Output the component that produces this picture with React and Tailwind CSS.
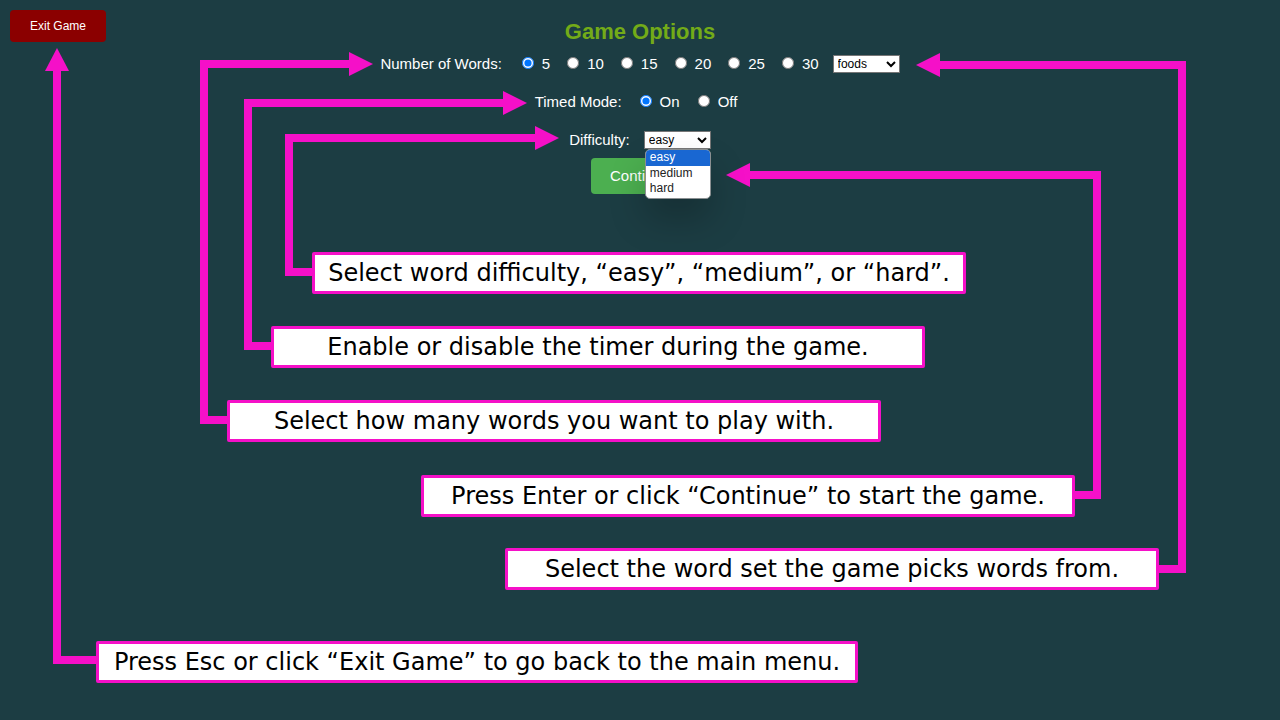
import { useState } from "react";

const wordCounts = [5, 10, 15, 20, 25, 30];
const difficulties = ["easy", "medium", "hard"];

const callouts = [
  { place: "left-[312px] top-[252px] w-[654px]", text: "Select word difficulty, “easy”, “medium”, or “hard”." },
  { place: "left-[271px] top-[326px] w-[654px]", text: "Enable or disable the timer during the game." },
  { place: "left-[227px] top-[400px] w-[654px]", text: "Select how many words you want to play with." },
  { place: "left-[421px] top-[475px] w-[654px]", text: "Press Enter or click “Continue” to start the game." },
  { place: "left-[505px] top-[548px] w-[654px]", text: "Select the word set the game picks words from." },
  { place: "left-[96px] top-[641px] w-[762px]", text: "Press Esc or click “Exit Game” to go back to the main menu." },
];

const arrows = [
  { line: "M98 660H57V70", head: "57,48 45,71 69,71" },
  { line: "M229 420H204V64H350", head: "373,64 349,52 349,76" },
  { line: "M273 346H248V103H504", head: "527,103 503,91 503,115" },
  { line: "M314 272H289V138H536", head: "559,138 535,126 535,150" },
  { line: "M1157 569H1182V65H939", head: "916,65 940,53 940,77" },
  { line: "M1073 495H1097V175H749", head: "726,175 750,163 750,187" },
];

const selectClass =
  "h-[18px] w-[67px] rounded-none border border-[#767676] bg-white text-xs text-black";

function Radio({ name, label, checked, onChange }) {
  return (
    <label className="flex items-center gap-2">
      <input type="radio" name={name} checked={checked} onChange={onChange} className="m-0 mb-0.5 size-3" />
      {label}
    </label>
  );
}

function Annotations() {
  return (
    <div className="pointer-events-none absolute left-1/2 top-0 h-[720px] w-[1280px] -translate-x-1/2">
      <svg viewBox="0 0 1280 720" className="size-full" aria-hidden="true">
        {arrows.map((a) => (
          <g key={a.line}>
            <path d={a.line} fill="none" stroke="#f510c8" strokeWidth="8" />
            <polygon points={a.head} fill="#f510c8" />
          </g>
        ))}
      </svg>
      {callouts.map((c) => (
        <p
          key={c.text}
          className={`absolute rounded-xs border-3 border-[#f510c8] bg-white text-center font-['DejaVu_Sans',sans-serif] text-2xl leading-9 whitespace-nowrap text-black ${c.place}`}
        >
          {c.text}
        </p>
      ))}
    </div>
  );
}

export default function App() {
  const [count, setCount] = useState(5);
  const [timed, setTimed] = useState(true);
  const [difficulty, setDifficulty] = useState("easy");

  return (
    <div className="relative min-h-screen overflow-hidden bg-[#1c3d43] font-['Liberation_Sans',Arial,sans-serif] text-[15px] leading-5 text-white">
      <button type="button" className="absolute left-[10px] top-[10px] h-8 w-24 rounded bg-[#8b0000] text-xs">
        Exit Game
      </button>

      <main className="flex flex-col items-center pt-4">
        <h1 className="text-[22px] leading-8 font-bold text-[#73ab18]">Game Options</h1>

        <div className="mt-1.5 flex items-center">
          <span className="mr-5">Number of Words:</span>
          <div className="flex gap-[17px]" role="radiogroup" aria-label="Number of Words">
            {wordCounts.map((n) => (
              <Radio key={n} name="count" label={n} checked={count === n} onChange={() => setCount(n)} />
            ))}
          </div>
          <select aria-label="Word set" defaultValue="foods" className={`ml-3.5 ${selectClass}`}>
            <option>foods</option>
          </select>
        </div>

        <div className="mt-[18px] flex items-center gap-[18px] pr-2">
          <span>Timed Mode:</span>
          <Radio name="timed" label="On" checked={timed} onChange={() => setTimed(true)} />
          <Radio name="timed" label="Off" checked={!timed} onChange={() => setTimed(false)} />
        </div>

        <div className="mt-[18px] flex items-center gap-3.5">
          <label htmlFor="difficulty">Difficulty:</label>
          <div className="relative flex">
            <select
              id="difficulty"
              value={difficulty}
              onChange={(e) => setDifficulty(e.target.value)}
              className={selectClass}
            >
              {difficulties.map((d) => (
                <option key={d}>{d}</option>
              ))}
            </select>
            <ul
              role="listbox"
              aria-label="Difficulty"
              className="absolute left-px top-full z-10 w-[66px] overflow-hidden rounded-[5px] border border-[#8a8f91] bg-white pb-0.5 text-xs leading-[15px] text-[#222222] shadow-[0_20px_36px_0_rgba(0,0,0,0.22)]"
            >
              {difficulties.map((d) => (
                <li
                  key={d}
                  role="option"
                  aria-selected={d === difficulty}
                  className={d === difficulty ? "bg-[#1967d2] px-1 pb-px text-white" : "px-1"}
                >
                  {d}
                </li>
              ))}
            </ul>
          </div>
        </div>

        <button type="button" className="mt-2 h-9 rounded bg-[#4caf50] px-[19px]">
          Continue
        </button>
      </main>

      <Annotations />
    </div>
  );
}
